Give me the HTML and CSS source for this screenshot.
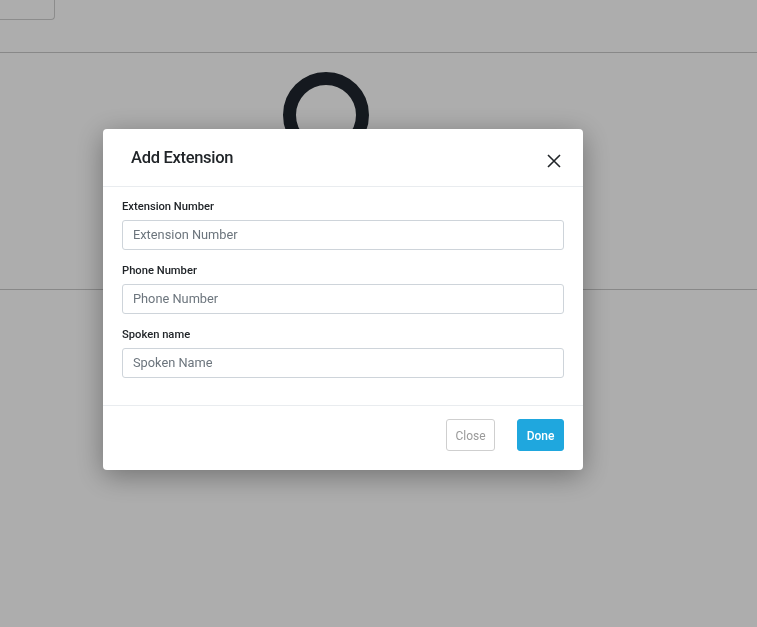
FILE: index.html
```html
<!DOCTYPE html>
<html lang="en">
<head>
<meta charset="utf-8">
<title>Add Extension</title>
<link rel="stylesheet" href="styles.css">
</head>
<body>
  <div class="page">
    <div class="toolbar">
      <div class="toolbar-btn"></div>
    </div>
    <div class="content">
      <div class="spinner"></div>
    </div>
  </div>

  <div class="backdrop">
    <div class="dialog" role="dialog" aria-labelledby="dlg-title">
      <div class="dialog-header">
        <h5 class="dialog-title" id="dlg-title">Add Extension</h5>
        <button class="dialog-close" type="button" aria-label="Close">
          <svg width="14" height="14" viewBox="0 0 14 14"><path d="M1 1L13 13M13 1L1 13" stroke="#212529" stroke-width="1.6" fill="none"/></svg>
        </button>
      </div>
      <div class="dialog-body">
        <div class="field">
          <label class="field-label">Extension Number</label>
          <input class="field-input" type="text" placeholder="Extension Number">
        </div>
        <div class="field">
          <label class="field-label">Phone Number</label>
          <input class="field-input" type="text" placeholder="Phone Number">
        </div>
        <div class="field">
          <label class="field-label">Spoken name</label>
          <input class="field-input" type="text" placeholder="Spoken Name">
        </div>
      </div>
      <div class="dialog-footer">
        <button class="btn btn-outline" type="button">Close</button>
        <button class="btn btn-primary" type="button">Done</button>
      </div>
    </div>
  </div>
</body>
</html>
```

FILE: styles.css
```css
* { box-sizing: border-box; }

html, body {
  margin: 0;
  padding: 0;
  height: 100%;
}

body {
  font-family: Roboto, "Liberation Sans", Arial, sans-serif;
  background: #ffffff;
  color: #212529;
  overflow: hidden;
}

.page {
  height: 100%;
}

.toolbar {
  height: 53px;
  border-bottom: 1px solid #c9c9c9;
}

.toolbar-btn {
  width: 55px;
  height: 20px;
  border: 1px solid #cfcfcf;
  border-top: none;
  border-left: none;
  border-radius: 0 0 4px 0;
}

.content {
  height: 237px;
  border-bottom: 1px solid #c9c9c9;
  padding: 19px 0 0 283px;
}

.spinner {
  width: 86px;
  height: 86px;
  border-radius: 50%;
  border: 13px solid #1f262e;
}

.backdrop {
  position: fixed;
  inset: 0;
  background: rgba(0, 0, 0, 0.32);
  padding: 129px 0 0 103px;
}

.dialog {
  width: 480px;
  background: #ffffff;
  border-radius: 4px;
  box-shadow: 0 6px 28px rgba(0, 0, 0, 0.35);
}

.dialog-header {
  height: 58px;
  border-bottom: 1px solid #e9ecef;
  display: flex;
  align-items: flex-start;
  justify-content: space-between;
  padding: 0 21px 0 28px;
}

.dialog-title {
  margin: 0;
  padding-top: 18px;
  font-size: 16.5px;
  line-height: 22px;
  font-weight: 500;
  letter-spacing: -0.3px;
  color: #212529;
}

.dialog-close {
  margin-top: 24px;
  width: 16px;
  height: 16px;
  padding: 1px;
  border: none;
  background: transparent;
  display: flex;
  align-items: center;
  justify-content: center;
  cursor: pointer;
}

.dialog-body {
  padding: 12px 19px 14px;
}

.field {
  margin-bottom: 13.5px;
}

.field-label {
  display: block;
  font-size: 11.2px;
  line-height: 16px;
  font-weight: 500;
  color: #212529;
  margin-bottom: 4.5px;
}

.field-input {
  display: block;
  width: 100%;
  height: 30px;
  border: 1px solid #ced4da;
  border-radius: 3px;
  padding: 0 10px 1px;
  font-family: Roboto, "Liberation Sans", Arial, sans-serif;
  font-size: 12.8px;
  color: #495057;
  background: #ffffff;
  outline: none;
}

.field-input::placeholder {
  color: #6c757d;
  opacity: 1;
}

.dialog-footer {
  display: flex;
  justify-content: flex-end;
  gap: 22px;
  border-top: 1px solid #e9ecef;
  padding: 13px 19px 19px;
}

.btn {
  height: 32px;
  border-radius: 3px;
  font-family: Roboto, "Liberation Sans", Arial, sans-serif;
  font-size: 12px;
  line-height: 30px;
  padding: 1px 0 0;
  text-align: center;
  cursor: pointer;
}

.btn-outline {
  background: #ffffff;
  border: 1px solid #cfcfcf;
  color: #9a9a9a;
  width: 49px;
}

.btn-primary {
  background: #1fa7de;
  border: 1px solid #1fa7de;
  color: #ffffff;
  font-weight: 500;
  width: 47px;
}
```
